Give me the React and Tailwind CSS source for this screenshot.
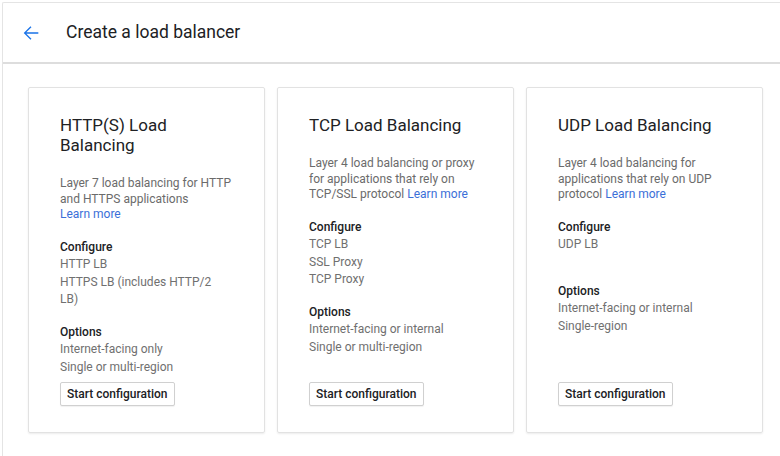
import React from "react";

const cards = [
  {
    title: "HTTP(S) Load Balancing",
    desc: "Layer 7 load balancing for HTTP and HTTPS applications",
    linkOwnLine: true,
    configure: ["HTTP LB", "HTTPS LB (includes HTTP/2 LB)"],
    options: ["Internet-facing only", "Single or multi-region"],
  },
  {
    title: "TCP Load Balancing",
    desc: "Layer 4 load balancing or proxy for applications that rely on TCP/SSL protocol",
    configure: ["TCP LB", "SSL Proxy", "TCP Proxy"],
    options: ["Internet-facing or internal", "Single or multi-region"],
  },
  {
    title: "UDP Load Balancing",
    desc: "Layer 4 load balancing for applications that rely on UDP protocol",
    configure: ["UDP LB"],
    options: ["Internet-facing or internal", "Single-region"],
    extraGap: true,
  },
];

function Card({ card }) {
  return (
    <div className="w-[237px] h-[346px] border border-[#e2e2e2] rounded-[2px] shadow-[0_1px_2px_rgba(0,0,0,0.08)] flex flex-col pl-[31px] pr-[24px] pt-[27px] pb-[26px]">
      <h2 className="text-[17px] leading-[20px] text-[#202124] max-w-[172px]">
        {card.title}
      </h2>
      <p className="mt-[21px] text-[12px] leading-[15.5px] text-[#6b6b6b]">
        {card.desc}
        {card.linkOwnLine ? <br /> : " "}
        <a href="#" className="text-[#3b6fd8]">
          Learn more
        </a>
      </p>
      <div className="mt-[16px] text-[12px] leading-[17.5px]">
        <div className="font-medium text-[#202124]">Configure</div>
        {card.configure.map((c) => (
          <div key={c} className="text-[#707070] max-w-[172px]">
            {c}
          </div>
        ))}
      </div>
      <div
        className={`${card.extraGap ? "mt-[29px]" : "mt-[15px]"} text-[12px] leading-[17.5px]`}
      >
        <div className="font-medium text-[#202124]">Options</div>
        {card.options.map((o) => (
          <div key={o} className="text-[#707070]">
            {o}
          </div>
        ))}
      </div>
      <div className="mt-auto">
        <button className="h-[24px] px-[6px] border border-[#d0d0d0] rounded-[2px] shadow-[0_1px_1px_rgba(0,0,0,0.06)] text-[12px] text-[#202124] font-medium bg-white">
          Start configuration
        </button>
      </div>
    </div>
  );
}

export default function App() {
  return (
    <div className="w-[780px] h-[456px] overflow-hidden bg-white pt-[2px] pl-[2px] font-['Roboto',sans-serif]">
      <div className="h-full border-t border-l border-[#e4e4e4] rounded-tl-[2px]">
        <div className="h-[61px] flex items-center border-b-2 border-[#dddddd] pl-[17px]">
          <svg width="22" height="22" viewBox="0 0 24 24" className="text-[#1a73e8]">
            <path
              d="M20 11.25H6.9l5.6-5.6-1.05-1.05L4.05 12l7.4 7.4 1.05-1.05-5.6-5.6H20z"
              fill="currentColor"
            />
          </svg>
          <h1 className="ml-[24px] text-[17.5px] text-[#202124]">
            Create a load balancer
          </h1>
        </div>
        <div className="flex gap-[12px] pl-[25px] pt-[23px]">
          {cards.map((c) => (
            <Card key={c.title} card={c} />
          ))}
        </div>
      </div>
    </div>
  );
}
